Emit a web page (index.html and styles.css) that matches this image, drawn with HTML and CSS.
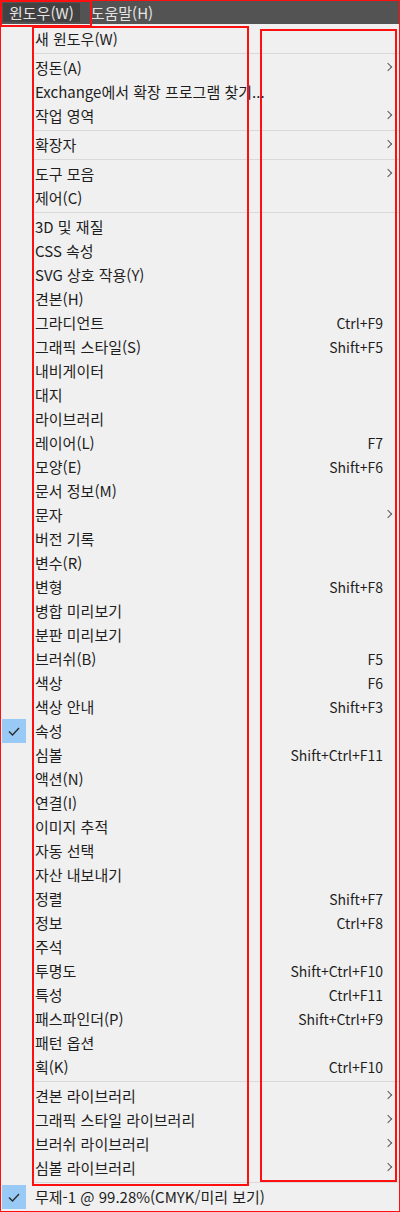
FILE: index.html
```html
<!DOCTYPE html>
<html lang="ko">
<head>
  <meta charset="UTF-8" />
  <title>윈도우 메뉴</title>
  <link rel="stylesheet" href="styles.css">
</head>
<body>
  <div class="menubar">
    <span class="bar-item active">윈도우(W)</span>
    <span class="bar-item">도움말(H)</span>
  </div>

  <div class="menu">
    <div class="item"><span class="gutter"></span><span class="label">새 윈도우(W)</span></div>
    <div class="sep"></div>
    <div class="item"><span class="gutter"></span><span class="label">정돈(A)</span><span class="arrow"></span></div>
    <div class="item"><span class="gutter"></span><span class="label">Exchange에서 확장 프로그램 찾기...</span></div>
    <div class="item"><span class="gutter"></span><span class="label">작업 영역</span><span class="arrow"></span></div>
    <div class="sep"></div>
    <div class="item"><span class="gutter"></span><span class="label">확장자</span><span class="arrow"></span></div>
    <div class="sep"></div>
    <div class="item"><span class="gutter"></span><span class="label">도구 모음</span><span class="arrow"></span></div>
    <div class="item"><span class="gutter"></span><span class="label">제어(C)</span></div>
    <div class="sep"></div>
    <div class="item"><span class="gutter"></span><span class="label">3D 및 재질</span></div>
    <div class="item"><span class="gutter"></span><span class="label">CSS 속성</span></div>
    <div class="item"><span class="gutter"></span><span class="label">SVG 상호 작용(Y)</span></div>
    <div class="item"><span class="gutter"></span><span class="label">견본(H)</span></div>
    <div class="item"><span class="gutter"></span><span class="label">그라디언트</span><span class="key">Ctrl+F9</span></div>
    <div class="item"><span class="gutter"></span><span class="label">그래픽 스타일(S)</span><span class="key">Shift+F5</span></div>
    <div class="item"><span class="gutter"></span><span class="label">내비게이터</span></div>
    <div class="item"><span class="gutter"></span><span class="label">대지</span></div>
    <div class="item"><span class="gutter"></span><span class="label">라이브러리</span></div>
    <div class="item"><span class="gutter"></span><span class="label">레이어(L)</span><span class="key">F7</span></div>
    <div class="item"><span class="gutter"></span><span class="label">모양(E)</span><span class="key">Shift+F6</span></div>
    <div class="item"><span class="gutter"></span><span class="label">문서 정보(M)</span></div>
    <div class="item"><span class="gutter"></span><span class="label">문자</span><span class="arrow"></span></div>
    <div class="item"><span class="gutter"></span><span class="label">버전 기록</span></div>
    <div class="item"><span class="gutter"></span><span class="label">변수(R)</span></div>
    <div class="item"><span class="gutter"></span><span class="label">변형</span><span class="key">Shift+F8</span></div>
    <div class="item"><span class="gutter"></span><span class="label">병합 미리보기</span></div>
    <div class="item"><span class="gutter"></span><span class="label">분판 미리보기</span></div>
    <div class="item"><span class="gutter"></span><span class="label">브러쉬(B)</span><span class="key">F5</span></div>
    <div class="item"><span class="gutter"></span><span class="label">색상</span><span class="key">F6</span></div>
    <div class="item"><span class="gutter"></span><span class="label">색상 안내</span><span class="key">Shift+F3</span></div>
    <div class="item"><span class="gutter"><span class="check"><svg viewBox="0 0 24 24" width="24" height="24"><path d="M7 12.5l3.5 3.5 6.5-7" fill="none" stroke="#2b2b2b" stroke-width="1.4"/></svg></span></span><span class="label">속성</span></div>
    <div class="item"><span class="gutter"></span><span class="label">심볼</span><span class="key">Shift+Ctrl+F11</span></div>
    <div class="item"><span class="gutter"></span><span class="label">액션(N)</span></div>
    <div class="item"><span class="gutter"></span><span class="label">연결(I)</span></div>
    <div class="item"><span class="gutter"></span><span class="label">이미지 추적</span></div>
    <div class="item"><span class="gutter"></span><span class="label">자동 선택</span></div>
    <div class="item"><span class="gutter"></span><span class="label">자산 내보내기</span></div>
    <div class="item"><span class="gutter"></span><span class="label">정렬</span><span class="key">Shift+F7</span></div>
    <div class="item"><span class="gutter"></span><span class="label">정보</span><span class="key">Ctrl+F8</span></div>
    <div class="item"><span class="gutter"></span><span class="label">주석</span></div>
    <div class="item"><span class="gutter"></span><span class="label">투명도</span><span class="key">Shift+Ctrl+F10</span></div>
    <div class="item"><span class="gutter"></span><span class="label">특성</span><span class="key">Ctrl+F11</span></div>
    <div class="item"><span class="gutter"></span><span class="label">패스파인더(P)</span><span class="key">Shift+Ctrl+F9</span></div>
    <div class="item"><span class="gutter"></span><span class="label">패턴 옵션</span></div>
    <div class="item"><span class="gutter"></span><span class="label">획(K)</span><span class="key">Ctrl+F10</span></div>
    <div class="sep"></div>
    <div class="item"><span class="gutter"></span><span class="label">견본 라이브러리</span><span class="arrow"></span></div>
    <div class="item"><span class="gutter"></span><span class="label">그래픽 스타일 라이브러리</span><span class="arrow"></span></div>
    <div class="item"><span class="gutter"></span><span class="label">브러쉬 라이브러리</span><span class="arrow"></span></div>
    <div class="item"><span class="gutter"></span><span class="label">심볼 라이브러리</span><span class="arrow"></span></div>
    <div class="sep"></div>
    <div class="item"><span class="gutter"><span class="check"><svg viewBox="0 0 24 24" width="24" height="24"><path d="M7 12.5l3.5 3.5 6.5-7" fill="none" stroke="#2b2b2b" stroke-width="1.4"/></svg></span></span><span class="label">무제-1 @ 99.28%(CMYK/미리 보기)</span></div>
  </div>

  <!-- red markup boxes drawn over the screenshot -->
  <div class="mark mark-page"></div>
  <div class="mark mark-bar"></div>
  <div class="mark mark-labels"></div>
  <div class="mark mark-keys"></div>
</body>
</html>
```

FILE: styles.css
```css
* {
  box-sizing: border-box;
}
body {
  margin: 0;
  width: 400px;
  height: 1212px;
  background: #f0f0f0;
  font-family: "Noto Sans CJK KR", "Noto Sans", sans-serif;
  font-size: 15px;
  color: #1e1e1e;
  position: relative;
  overflow: hidden;
}
.menubar {
  height: 24px;
  background: #535353;
  display: flex;
  align-items: center;
  padding-left: 3px;
}
.bar-item {
  height: 19px;
  line-height: 19px;
  padding: 0 6px;
  margin-right: 5px;
  color: #e4e4e4;
  font-size: 15px;
}
.bar-item.active {
  background: #424242;
}
.menu {
  padding: 3px 0;
}
.item {
  display: flex;
  align-items: center;
  height: 24px;
  line-height: 24px;
  white-space: nowrap;
}
.gutter {
  width: 35px;
  height: 24px;
  flex: none;
  padding-left: 2px;
}
.check {
  display: block;
  width: 24px;
  height: 24px;
  background: #99c9f5;
}
.check svg {
  display: block;
}
.label {
  flex: 1;
}
.key {
  padding-right: 17px;
  font-size: 14px;
}
.arrow {
  width: 18px;
  height: 24px;
  margin-left: auto;
  position: relative;
}
.arrow::after {
  content: "";
  position: absolute;
  left: 3px;
  top: 8px;
  width: 5px;
  height: 5px;
  border-right: 1px solid #5a5a5a;
  border-top: 1px solid #5a5a5a;
  transform: rotate(45deg);
}
.sep {
  height: 5px;
  margin-left: 33px;
  border-top: 2px solid #f0f0f0;
  border-bottom: 2px solid #f0f0f0;
  background: #d9d9d9;
}
.mark {
  position: absolute;
  border: 2px solid #ff1010;
}
.mark-page {
  left: 0;
  top: 0;
  width: 400px;
  height: 1212px;
  border-width: 1px;
}
.mark-bar {
  left: 0;
  top: 0;
  width: 92px;
  height: 27px;
}
.mark-labels {
  left: 32px;
  top: 26px;
  width: 217px;
  height: 1160px;
}
.mark-keys {
  left: 260px;
  top: 29px;
  width: 137px;
  height: 1153px;
}
```
